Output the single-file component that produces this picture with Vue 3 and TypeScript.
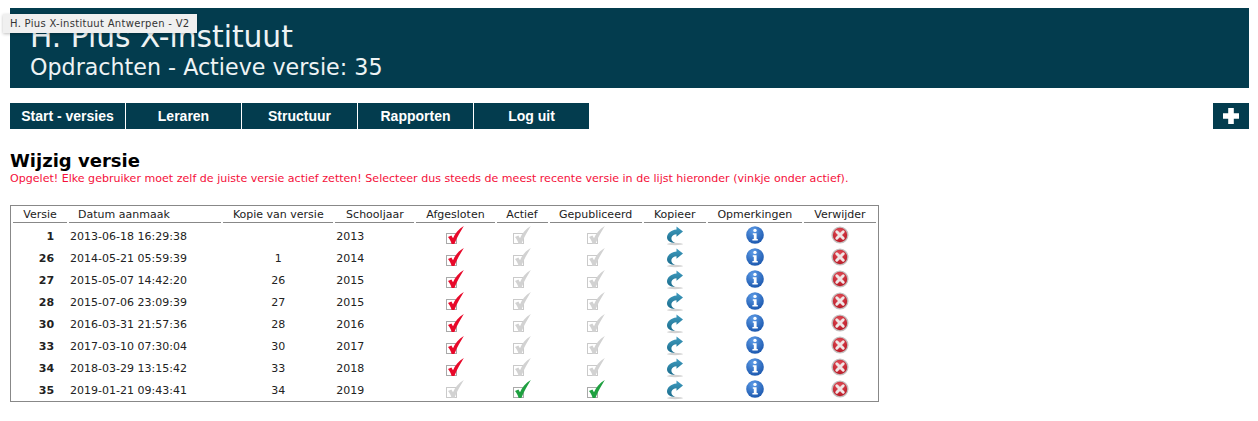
<script setup lang="ts">
interface Row {
  v: number
  date: string
  copy: string
  year: number
  closed: boolean
  active: boolean
  pub: boolean
}
const rows: Row[] = [
  { v: 1, date: '2013-06-18 16:29:38', copy: '', year: 2013, closed: true, active: false, pub: false },
  { v: 26, date: '2014-05-21 05:59:39', copy: '1', year: 2014, closed: true, active: false, pub: false },
  { v: 27, date: '2015-05-07 14:42:20', copy: '26', year: 2015, closed: true, active: false, pub: false },
  { v: 28, date: '2015-07-06 23:09:39', copy: '27', year: 2015, closed: true, active: false, pub: false },
  { v: 30, date: '2016-03-31 21:57:36', copy: '28', year: 2016, closed: true, active: false, pub: false },
  { v: 33, date: '2017-03-10 07:30:04', copy: '30', year: 2017, closed: true, active: false, pub: false },
  { v: 34, date: '2018-03-29 13:15:42', copy: '33', year: 2018, closed: true, active: false, pub: false },
  { v: 35, date: '2019-01-21 09:43:41', copy: '34', year: 2019, closed: false, active: true, pub: true },
]
const nav = ['Start - versies', 'Leraren', 'Structuur', 'Rapporten', 'Log uit']
const widths = [54, 152, 110, 79, 78, 51, 92, 62, 94, 72]
const heads = ['Versie', 'Datum aanmaak', 'Kopie van versie', 'Schooljaar', 'Afgesloten', 'Actief', 'Gepubliceerd', 'Kopieer', 'Opmerkingen', 'Verwijder']
const checkPath = 'M4 13 L7.4 11.6 L9 14.2 C11 9.5 14.5 5 19.8 2 C16.5 7.5 13 13 10.4 20 L7.6 20 C7 17.2 5.6 15 4 13Z'
function boxClass(on: boolean, color: string): string {
  return on ? color : 'off'
}
</script>

<template>
  <div class="page">
    <svg class="defs" aria-hidden="true">
      <defs>
        <linearGradient id="gArrow" x1="0" y1="0" x2="0" y2="1">
          <stop offset="0" stop-color="#3f9cc0" />
          <stop offset="1" stop-color="#1b6c8c" />
        </linearGradient>
        <radialGradient id="gInfo" cx="0.4" cy="0.25" r="0.85">
          <stop offset="0" stop-color="#5d9be6" />
          <stop offset="1" stop-color="#1450a8" />
        </radialGradient>
        <radialGradient id="gDel" cx="0.45" cy="0.3" r="0.8">
          <stop offset="0" stop-color="#e4505a" />
          <stop offset="1" stop-color="#b3121f" />
        </radialGradient>
      </defs>
    </svg>

    <div class="tooltip">H. Pius X-instituut Antwerpen - V2</div>

    <header class="banner">
      <div class="title">H. Pius X-instituut</div>
      <div class="subtitle">Opdrachten - Actieve versie: 35</div>
    </header>

    <nav class="navbar">
      <div class="menu">
        <a v-for="n in nav" :key="n" class="item">{{ n }}</a>
      </div>
      <a class="plus">
        <svg width="18" height="16" viewBox="0 0 18 16"><path d="M6.2 0h5.6v5.2H17v5.6h-5.2V16H6.2v-5.2H1V5.2h5.2z" fill="#fff" /></svg>
      </a>
    </nav>

    <h1 class="heading">Wijzig versie</h1>
    <p class="warn">Opgelet! Elke gebruiker moet zelf de juiste versie actief zetten! Selecteer dus steeds de meest recente versie in de lijst hieronder (vinkje onder actief).</p>

    <table class="grid">
      <colgroup>
        <col v-for="(w, i) in widths" :key="i" :style="{ width: w + 'px' }" />
      </colgroup>
      <thead>
        <tr>
          <th v-for="(h, i) in heads" :key="h" :class="{ pad: i === 1 }">{{ h }}</th>
        </tr>
      </thead>
      <tbody>
        <tr v-for="r in rows" :key="r.v">
          <td class="txt num">{{ r.v }}</td>
          <td class="txt left">{{ r.date }}</td>
          <td class="txt">{{ r.copy }}</td>
          <td class="txt left">{{ r.year }}</td>
          <td v-for="(state, k) in [r.closed, r.active, r.pub]" :key="k">
            <svg class="ico" width="22" height="22" viewBox="0 0 22 22" :class="boxClass(state, k === 0 ? 'red' : 'green')">
              <rect class="box" x="2.5" y="9.5" width="10" height="10" fill="none" stroke-width="1" />
              <path class="tick" :d="checkPath" />
            </svg>
          </td>
          <td>
            <svg class="ico" width="22" height="22" viewBox="0 0 22 22">
              <ellipse cx="11" cy="20" rx="8" ry="1.2" fill="#d2d2d2" />
              <path d="M19 7.5 L12.5 2.5 V5.5 C7 6 3 9.5 3 13.5 C3 16.5 6 18.8 11 19 C8 17.5 7 15.5 7.5 13.5 C8 11.5 10 10.2 12.5 10.2 V12.8 Z" fill="url(#gArrow)" />
            </svg>
          </td>
          <td>
            <svg class="ico" width="22" height="22" viewBox="0 0 22 22">
              <circle cx="11" cy="11" r="8.8" fill="url(#gInfo)" />
              <circle cx="11" cy="6.4" r="1.7" fill="#fff" />
              <path d="M8.8 9.2 H12.6 V15 H13.8 V16.6 H8.4 V15 H9.8 V10.8 H8.8Z" fill="#fff" />
            </svg>
          </td>
          <td>
            <svg class="ico" width="22" height="22" viewBox="0 0 22 22">
              <circle cx="11" cy="11" r="8.6" fill="#c4bfbf" />
              <circle cx="11" cy="11" r="7.2" fill="url(#gDel)" />
              <path d="M7.8 7.8 L14.2 14.2 M14.2 7.8 L7.8 14.2" stroke="#efe6e6" stroke-width="3" stroke-linecap="round" />
            </svg>
          </td>
        </tr>
      </tbody>
    </table>
  </div>
</template>

<style scoped>
.page {
  position: relative;
  box-sizing: border-box;
  width: 1258px;
  height: 421px;
  padding: 8px 9px 0 10px;
  overflow: hidden;
  background: #fff;
  font-family: "DejaVu Sans", sans-serif;
  color: #000;
}
.defs {
  position: absolute;
  width: 0;
  height: 0;
}
.tooltip {
  position: absolute;
  left: 3px;
  top: 14px;
  box-sizing: border-box;
  width: 194px;
  height: 19px;
  padding-left: 7px;
  background: #f0f0f0;
  font: 10px/19px "DejaVu Sans", sans-serif;
  letter-spacing: 0.3px;
  color: #333;
  box-shadow: 0 1px 3px rgba(0, 0, 0, 0.25);
  white-space: nowrap;
}
.banner {
  box-sizing: border-box;
  height: 80px;
  padding: 11px 0 0 20px;
  background: #033c4e;
  color: #eef3f4;
}
.title {
  font-size: 29.7px;
  line-height: 36px;
}
.subtitle {
  font-size: 22.2px;
  line-height: 25px;
}
.navbar {
  display: flex;
  justify-content: space-between;
  margin-top: 15px;
  height: 26px;
}
.menu {
  display: flex;
  gap: 1px;
}
.item {
  width: 115px;
  background: #033c4e;
  color: #fff;
  font: bold 14px/26px "Liberation Sans", sans-serif;
  text-align: center;
}
.plus {
  display: flex;
  align-items: center;
  justify-content: center;
  width: 36px;
  background: #033c4e;
}
.heading {
  margin: 22px 0 0;
  font-size: 18px;
  line-height: 19px;
  font-weight: bold;
}
.warn {
  margin: 1px 0 0;
  font-size: 11.07px;
  line-height: 15px;
  color: #f5103a;
  white-space: nowrap;
}
.grid {
  margin-top: 19px;
  width: 869px;
  table-layout: fixed;
  border: 1px solid #888;
  border-spacing: 2px;
  border-collapse: separate;
  font-size: 11px;
  color: #222;
}
.grid th {
  height: 14px;
  padding: 0;
  font-weight: normal;
  line-height: 14px;
  text-align: center;
  border-bottom: 1px solid #888;
}
.grid th.pad {
  padding-left: 9px;
  text-align: left;
}
.grid td {
  box-sizing: border-box;
  height: 20px;
  padding: 0;
  text-align: center;
  vertical-align: middle;
}
.grid td.txt {
  padding-top: 2px;
}
.grid td.num {
  padding-right: 13px;
  font-weight: bold;
  text-align: right;
}
.grid td.left {
  padding-left: 1px;
  text-align: left;
}
.ico {
  display: block;
  margin: -1px auto;
}
.box {
  stroke: #a9a9a9;
}
.off .box {
  stroke: #cacaca;
}
.off .tick {
  fill: #d2d2d2;
}
.red .tick {
  fill: #e8092a;
}
.green .tick {
  fill: #1fa040;
}
</style>
